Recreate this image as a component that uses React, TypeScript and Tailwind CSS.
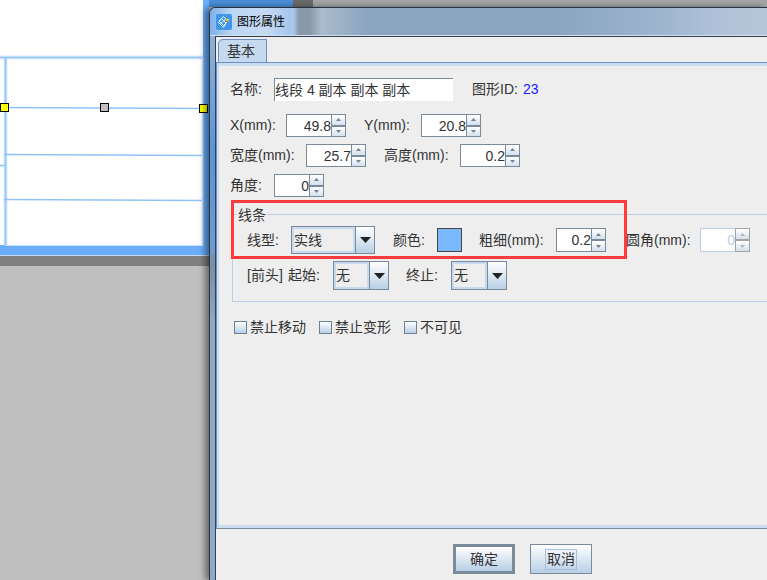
import React from "react";

const Spinner: React.FC<{ value: string; className: string; disabled?: boolean; hClass?: string }> = ({
  value,
  className,
  disabled,
  hClass = "h-[23px]",
}) => {
  const line = disabled ? "border-[#b8cfe6]" : "border-[#7a8a99]";
  const btn = disabled ? "border-[#a3a3a3]" : "border-[#7a8a99]";
  const arrow = disabled ? "text-[#b5b5b5]" : "text-[#76838f]";
  return (
    <div className={`flex shrink-0 ${hClass} ${className}`}>
      <div
        className={`flex-1 min-w-0 border-l border-t border-b ${line} bg-white flex items-center justify-end text-[14px] leading-none ${disabled ? "text-[#b8cfe6]" : "text-[#333]"}`}
      >
        {value}
      </div>
      <div className={`w-[15px] shrink-0 flex flex-col border ${btn}`}>
        <div className={`flex-1 bg-linear-to-b from-white to-[#d3e0ee] flex items-center justify-center border-b-2 ${btn}`}>
          <svg width="5" height="3" viewBox="0 0 5 3" className={arrow}>
            <path d="M2.5 0 5 3H0z" fill="currentColor" />
          </svg>
        </div>
        <div className="flex-1 bg-linear-to-b from-white to-[#d3e0ee] flex items-center justify-center">
          <svg width="5" height="3" viewBox="0 0 5 3" className={arrow}>
            <path d="M0 0h5L2.5 3z" fill="currentColor" />
          </svg>
        </div>
      </div>
    </div>
  );
};

const Combo: React.FC<{ value: string; className: string; hClass: string }> = ({ value, className, hClass }) => (
  <div className={`flex shrink-0 border border-[#7a8a99] ${hClass} ${className}`}>
    <div className="flex-1 min-w-0 border-2 border-[#c5d9ef] bg-[#eeeeee] flex items-center text-[14px] text-[#333]">
      {value}
    </div>
    <div className="w-[19px] shrink-0 border-l border-[#7a8a99] bg-linear-to-b from-white to-[#b8cfe6] flex items-center justify-center">
      <svg width="11" height="6" viewBox="0 0 11 6">
        <path d="M0 0h11L5.500 6z" fill="#222" />
      </svg>
    </div>
  </div>
);

const Check: React.FC<{ text: string }> = ({ text }) => (
  <div className="w-[85px] shrink-0 flex items-center gap-[3px]">
    <div className="w-[13px] h-[13px] border border-[#6f7f8e] bg-linear-to-b from-white to-[#b8cfe6]" />
    <span className="text-[14px] leading-none text-[#333] -mt-[2px]">{text}</span>
  </div>
);

const Canvas: React.FC = () => (
  <svg width="209" height="246" viewBox="0 0 209 246" className="block">
    <rect x="0" y="0" width="203" height="245" fill="#fff" />
    <g stroke="#dbeafe" strokeWidth="4">
      <path d="M0 57.5H203M5.500 57V245" />
    </g>
    <g stroke="#8fc3fb" strokeWidth="1.6" fill="none">
      <path d="M0 57.5H203" />
      <path d="M0 107.500 203 108.500" />
      <path d="M4 154.500 203 155.500" />
      <path d="M4 199.500 203 200.500" />
      <path d="M0 165.500H5" />
      <path d="M5.500 57V245" />
      <path d="M202.500 57V245" stroke="#cfe3fb" />
      <path d="M5 245.500H203" stroke="#cfe3fb" />
    </g>
    <rect x="0.5" y="103.500" width="8" height="8" fill="#ffff00" stroke="#000" />
    <rect x="100.500" y="103.500" width="8" height="8" fill="#c0c0c0" stroke="#000" />
    <rect x="199.500" y="104.500" width="8" height="8" fill="#ffff00" stroke="#000" />
  </svg>
);

const AppIcon: React.FC = () => (
  <svg width="16" height="16" viewBox="0 0 16 16" className="shrink-0">
    <rect width="16" height="16" rx="2" fill="#3f97ea" />
    <g stroke="#e8f3ff" strokeWidth="1" fill="none">
      <path d="M7.500 2.500 12 7 7.500 11.500 3 7z" />
      <path d="M5.500 4.500 10 9 7.500 13.500 2.500 8.500z" />
      <path d="M5 9.500 9.500 5" />
    </g>
    <rect x="10" y="5" width="3" height="2" fill="#e8c93a" />
    <rect x="10" y="7" width="2" height="1" fill="#d9553a" />
  </svg>
);

const App: React.FC = () => {
  return (
    <div className="relative flex w-[767px] h-[580px] overflow-hidden bg-[#bfbfbf] [font-family:'Liberation_Sans','Noto_Sans_CJK_SC',sans-serif]">
      {/* editor behind the dialog */}
      <div className="w-[209px] shrink-0 flex flex-col">
        <div className="h-[246px] bg-[#6aaefb]">
          <Canvas />
        </div>
        <div className="h-[10px] bg-[#6aaefb] border-b border-[#c5dcf7]" />
        <div className="h-[10px] bg-[#808080]" />
        <div className="flex-1 bg-[#bfbfbf]" />
      </div>

      <div className="relative z-10 flex-1 min-w-0 flex flex-col">
        <div className="h-[7px] flex">
          <div className="w-[84px] bg-[#4a8fd8]" />
          <div className="w-[20px] bg-[#6b6b6b]" />
          <div className="flex-1 bg-[#a6a6a6]" />
        </div>

        <div className="flex-1 min-h-0 flex flex-col rounded-tl-[6px] border-l border-t border-[#26323d] pl-[5px] bg-[linear-gradient(180deg,#9db8d8_0%,#5b95d5_25%,#6d9bd0_42%,#7c8fa3_45%,#8ea8c8_55%,#8fa9c9_100%)] shadow-[-4px_0_6px_rgba(0,0,0,0.45)]">
          <div className="-ml-[5px] rounded-tl-[6px] h-[28px] flex items-center gap-[5px] pl-[6px] border-b border-[#d3e0ee] bg-[linear-gradient(90deg,#7fb0e8_0%,#bcd6f3_4%,#c6daf2_10%,#a9c8ee_14%,#a9c8ee_15%,#8a98a6_16%,#8b9aa9_18%,#aabccd_20%,#8ba5c0_28%,#8ba5c0_62%,#9ab2cc_78%,#b1c3da_92%,#b5c6d6_100%)]">
            <AppIcon />
            <span className="text-[12px] leading-none text-black">图形属性</span>
          </div>

          <div className="flex-1 min-h-0 flex flex-col bg-[#eeeeee] border-l border-t border-[#33414f]">
            <div className="pl-[2px] pt-[2px]">
              <div className="w-[49px] h-[23px] border-l border-t border-r border-[#6f8fc8] rounded-tl-[5px] bg-[#c5d9ef] text-[14px] text-[#333] flex items-center pl-[8px]">
                基本
              </div>
            </div>

            <div className="flex-1 min-h-0 flex flex-col border-t border-l border-[#6f8fc8]">
              <div className="flex-1 min-h-0 flex flex-col border-t-[3px] border-l-2 border-b-[3px] border-[#c9dcf0] pl-[11px] pt-[12px] text-[14px] text-[#333]">
                <div className="flex items-center h-[23px]">
                  <span className="w-[44px]">名称:</span>
                  <div className="w-[179px] h-[23px] border-l border-t border-[#7a8a99] bg-white flex items-center whitespace-nowrap">
                    线段 4 副本 副本 副本
                  </div>
                  <span className="ml-[19px] w-[51px]">图形ID:</span>
                  <span className="text-[#1a1aff]">23</span>
                </div>

                <div className="flex items-center mt-[13px]">
                  <span className="w-[56px]">X(mm):</span>
                  <Spinner value="49.8" className="w-[60px]" />
                  <span className="ml-[18px] w-[57px]">Y(mm):</span>
                  <Spinner value="20.8" className="w-[60px]" />
                </div>

                <div className="flex items-center mt-[7px]">
                  <span className="w-[76px]">宽度(mm):</span>
                  <Spinner value="25.7" className="w-[60px]" />
                  <span className="ml-[18px] w-[76px]">高度(mm):</span>
                  <Spinner value="0.2" className="w-[60px]" />
                </div>

                <div className="flex items-center mt-[7px]">
                  <span className="w-[44px]">角度:</span>
                  <Spinner value="0" className="w-[50px]" />
                </div>

                <div className="relative ml-[2px] mt-[17px] -mr-[40px] border border-[#b8cfe6] pl-[14px] pb-[11px]">
                  <div className="-ml-[10px] -mt-[8px] w-fit h-[16px] px-[1px] bg-[#eeeeee] leading-[16px]">线条</div>
                  <div className="flex items-center mt-[3px]">
                    <span className="w-[44px]">线型:</span>
                    <Combo value="实线" className="w-[84px]" hClass="h-[28px]" />
                    <span className="ml-[18px] w-[44px]">颜色:</span>
                    <div className="w-[25px] h-[24px] shrink-0 border border-[#444] bg-[#79b8ff]" />
                    <span className="ml-[17px] w-[77px]">粗细(mm):</span>
                    <Spinner value="0.2" className="w-[50px]" hClass="h-[24px]" />
                    <span className="ml-[20px] w-[74px]">圆角(mm):</span>
                    <Spinner value="0" className="w-[50px]" hClass="h-[24px]" disabled />
                  </div>
                  <div className="flex items-center mt-[7px]">
                    <span className="w-[41px]">[前头]</span>
                    <span className="w-[45px]">起始:</span>
                    <Combo value="无" className="w-[56px]" hClass="h-[29px]" />
                    <span className="ml-[17px] w-[45px]">终止:</span>
                    <Combo value="无" className="w-[56px]" hClass="h-[29px]" />
                  </div>
                  {/* red callout drawn over the group */}
                  <div className="absolute -left-[2px] -top-[15px] w-[396px] h-[59px] border-[3px] border-[#ff3b3b] pointer-events-none" />
                </div>

                <div className="flex items-center ml-[4px] mt-[19px]">
                  <Check text="禁止移动" />
                  <Check text="禁止变形" />
                  <Check text="不可见" />
                </div>
              </div>
            </div>

            <div className="h-[52px] shrink-0 border-t border-[#7a8a99] pl-[237px] pt-[15px] flex items-start">
              <button className="w-[62px] h-[30px] border-[3px] border-[#7a8a99] bg-linear-to-b from-white to-[#b8cfe6] text-[14px] text-[#333] flex items-center justify-center">
                确定
              </button>
              <button className="ml-[15px] w-[62px] h-[30px] border border-[#7a8a99] bg-linear-to-b from-white to-[#b8cfe6] text-[14px] text-[#333] flex items-center justify-center">
                <span className="border border-[#a9c0da] px-px leading-[19px]">取消</span>
              </button>
            </div>
          </div>
        </div>
      </div>
    </div>
  );
};

export default App;
